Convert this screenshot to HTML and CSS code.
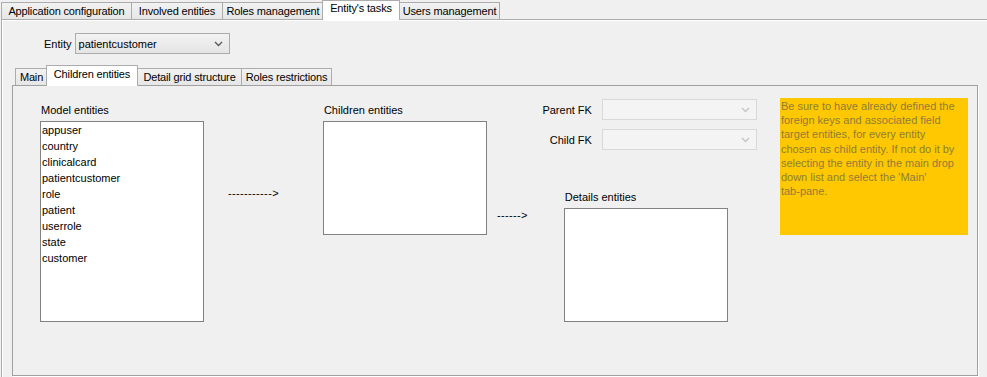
FILE: index.html
```html
<!DOCTYPE html>
<html>
<head>
<meta charset="utf-8">
<link rel="stylesheet" href="styles.css">
</head>
<body>
<div class="tabbar outer-tabs">
  <div class="tab first t-app">Application configuration</div>
  <div class="tab t-inv">Involved entities</div>
  <div class="tab t-roles">Roles management</div>
  <div class="tab selected t-tasks">Entity's tasks</div>
  <div class="tab t-users">Users management</div>
</div>
<div class="outer-panel">
  <div class="entity-row">
    <span class="lbl">Entity</span>
    <div class="combo entity-combo">
      <span class="combo-text">patientcustomer</span>
      <svg class="chev" width="9" height="6" viewBox="0 0 9 6"><polyline points="1,1 4.5,4.5 8,1" fill="none" stroke="#5a5a5a" stroke-width="1.4"/></svg>
    </div>
  </div>
  <div class="inner">
    <div class="tabbar inner-tabs">
      <div class="tab first t-main">Main</div>
      <div class="tab selected t-children">Children entities</div>
      <div class="tab t-grid">Detail grid structure</div>
      <div class="tab t-restr">Roles restrictions</div>
    </div>
    <div class="inner-panel">
      <div class="col col-model">
        <div class="caption">Model entities</div>
        <div class="listbox model-list">
          <div class="item">appuser</div>
          <div class="item">country</div>
          <div class="item">clinicalcard</div>
          <div class="item">patientcustomer</div>
          <div class="item">role</div>
          <div class="item">patient</div>
          <div class="item">userrole</div>
          <div class="item">state</div>
          <div class="item">customer</div>
        </div>
      </div>
      <div class="arrow arrow1">-----------&gt;</div>
      <div class="col col-children">
        <div class="caption">Children entities</div>
        <div class="listbox children-list"></div>
      </div>
      <div class="col col-fk">
        <div class="fk-row">
          <span class="fk-lbl">Parent FK</span>
          <div class="combo disabled">
            <svg class="chev" width="9" height="6" viewBox="0 0 9 6"><polyline points="1,1 4.5,4.5 8,1" fill="none" stroke="#c4c4c4" stroke-width="1.4"/></svg>
          </div>
        </div>
        <div class="fk-row second">
          <span class="fk-lbl">Child FK</span>
          <div class="combo disabled">
            <svg class="chev" width="9" height="6" viewBox="0 0 9 6"><polyline points="1,1 4.5,4.5 8,1" fill="none" stroke="#c4c4c4" stroke-width="1.4"/></svg>
          </div>
        </div>
        <div class="details-row">
          <div class="arrow arrow2">------&gt;</div>
          <div class="col col-details">
            <div class="caption">Details entities</div>
            <div class="listbox details-list"></div>
          </div>
        </div>
      </div>
      <div class="note">Be sure to have already defined the<br>foreign keys and associated field<br>target entities, for every entity<br>chosen as child entity. If not do it by<br>selecting the entity in the main drop<br>down list and select the 'Main'<br>tab-pane.</div>
    </div>
  </div>
</div>
</body>
</html>
```

FILE: styles.css
```css
html, body {
  margin: 0;
  padding: 0;
}
body {
  background: #f0f0f0;
  font-family: "Liberation Sans", Arial, sans-serif;
  font-size: 11px;
  color: #000;
  width: 987px;
  height: 377px;
  overflow: hidden;
}

/* tab bars */
.tabbar {
  display: flex;
  align-items: flex-end;
  height: 19px;
  position: relative;
  z-index: 1;
}
.tab {
  box-sizing: border-box;
  height: 17px;
  line-height: 16px;
  padding: 0;
  text-align: center;
  letter-spacing: -0.15px;
  border: 1px solid #acacac;
  border-bottom: none;
  margin-left: -1px;
  background: linear-gradient(#f2f2f2, #e6e6e6);
  white-space: nowrap;
}
.tab.first {
  margin-left: 0;
}
.tab.selected {
  height: 20px;
  line-height: 15px;
  background: #fff;
  margin-left: -2px;
  margin-right: -1px;
  margin-bottom: -1px;
  position: relative;
}
.tab.selected + .tab {
  margin-left: 0;
}

.t-app { width: 131px; }
.t-inv { width: 92px; }
.t-roles { width: 102px; }
.t-tasks { width: 78px; }
.t-users { width: 101px; }
.t-main { width: 33px; }
.t-children { width: 92px; }
.t-grid { width: 105px; }
.t-restr { width: 91px; }

.outer-tabs {
  margin-left: 1px;
}

/* outer panel */
.outer-panel {
  box-sizing: border-box;
  margin-left: 1px;
  border-top: 1px solid #acacac;
  border-left: 1px solid #acacac;
  box-shadow: inset 1px 1px 0 #fff;
  height: 358px;
  padding: 13px 9px 0 10px;
}

.entity-row {
  display: flex;
  align-items: center;
  padding-left: 32px;
  gap: 3px;
}
.combo {
  box-sizing: border-box;
  height: 21px;
  border: 1px solid #acacac;
  background: linear-gradient(#f2f2f2, #e5e5e5);
  display: flex;
  align-items: center;
  justify-content: space-between;
  padding: 0 6px 0 3px;
}
.entity-combo {
  width: 155px;
}
.combo .chev {
  margin-left: auto;
  margin-top: 1px;
}
.combo.disabled {
  width: 155px;
  background: #f4f4f4;
  border-color: #d9d9d9;
}

/* inner tabbed pane */
.inner {
  margin-top: 11px;
}
.inner-tabs {
  height: 20px;
  margin-left: 3px;
}
.inner-tabs .tab.selected {
  height: 21px;
  line-height: 17px;
}
.inner-panel {
  box-sizing: border-box;
  height: 291px;
  border: 1px solid #a0a0a0;
  box-shadow: 1px 1px 0 #fff;
  background: #f0f0f0;
  display: flex;
  align-items: flex-start;
  padding-left: 27px;
}

.caption {
  height: 14px;
  line-height: 14px;
  padding-left: 1px;
  margin-bottom: 4px;
}
.listbox {
  box-sizing: border-box;
  background: #fff;
  border: 1px solid #828282;
  width: 164px;
}
.col-model {
  margin-top: 17px;
}
.model-list {
  height: 201px;
}
.item {
  height: 16px;
  line-height: 16px;
  padding-left: 1px;
}

.arrow {
  line-height: 14px;
  letter-spacing: 0.35px;
  white-space: nowrap;
}
.arrow1 {
  margin-top: 100px;
  margin-left: 24px;
}
.col-children {
  margin-top: 17px;
  margin-left: 44px;
}
.children-list {
  height: 114px;
}

.col-fk {
  margin-top: 13px;
  margin-left: 10px;
  width: 260px;
}
.fk-row {
  display: flex;
  align-items: center;
  justify-content: flex-end;
  gap: 10px;
}
.fk-row.second {
  margin-top: 9px;
}
.details-row {
  display: flex;
  align-items: flex-start;
}
.arrow2 {
  margin-top: 58px;
}
.col-details {
  margin-top: 40px;
  margin-left: 36px;
}
.details-list {
  height: 114px;
}

.note {
  box-sizing: border-box;
  width: 188px;
  height: 137px;
  margin-top: 12px;
  margin-left: 23px;
  background: #ffc800;
  color: #8f7d3a;
  line-height: 14.2px;
  padding: 1px 2px 0 1px;
  white-space: nowrap;
  overflow: hidden;
}
```
